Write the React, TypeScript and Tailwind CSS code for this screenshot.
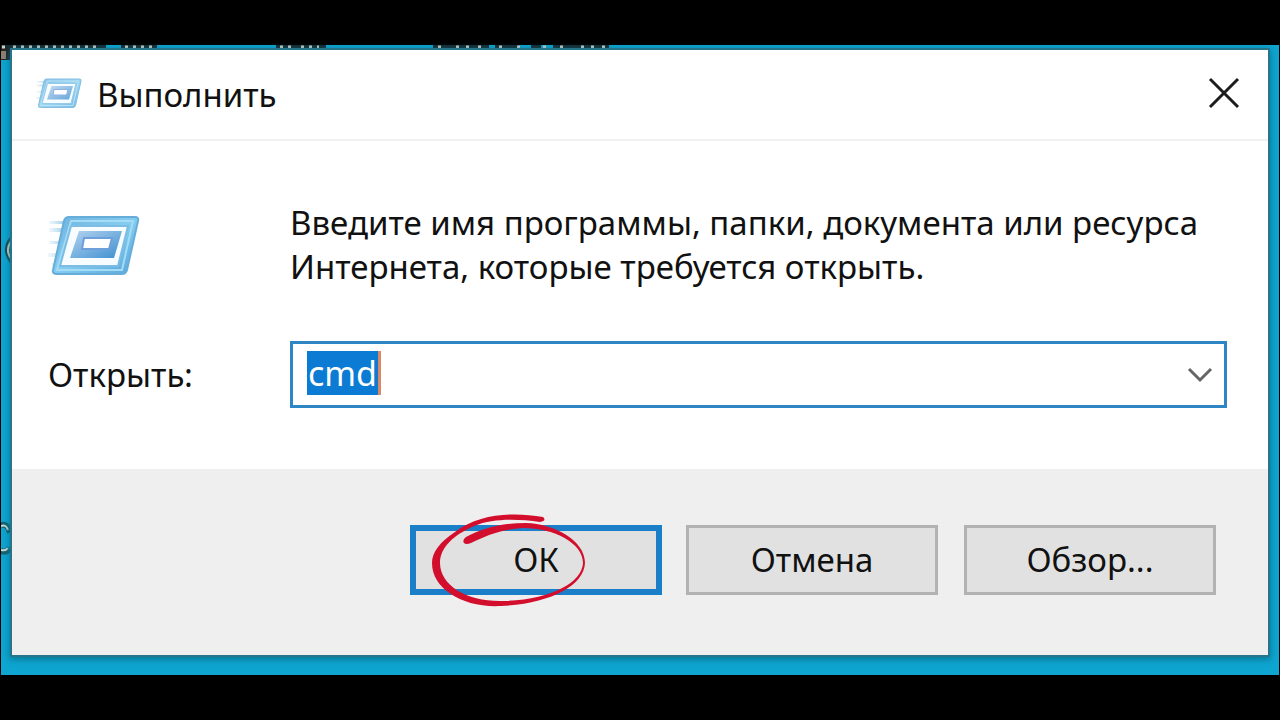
const buttonBase =
  "h-[70px] w-[252px] bg-[#e1e1e1] text-[33px] leading-[44px]";

function RunIcon({ className }: { className: string }) {
  return (
    <svg viewBox="0 0 92 64" className={className} aria-hidden="true">
      <defs>
        <linearGradient id="frame" x1="0" y1="0" x2="1" y2="1">
          <stop offset="0" stopColor="#6fb2e0" />
          <stop offset="0.5" stopColor="#84cdf0" />
          <stop offset="1" stopColor="#56a5db" />
        </linearGradient>
        <linearGradient id="screen" x1="0" y1="0" x2="1" y2="1">
          <stop offset="0" stopColor="#b5d3f0" />
          <stop offset="1" stopColor="#3d8fd0" />
        </linearGradient>
        <linearGradient id="trail" x1="0" y1="0" x2="1" y2="0">
          <stop offset="0" stopColor="#b9dcf0" stopOpacity="0.2" />
          <stop offset="1" stopColor="#8fc4e6" />
        </linearGradient>
      </defs>
      <path d="M1 8h18v3H1zM1 15h17v4H1zM1 28h14v3H1zM0 40h12v4H0zM4 50h6v3H4z" fill="url(#trail)" />
      <path d="M21 4h66q4 0 3 4L79 57q-1 4-5 4H9q-5 0-4-4L16 8q1-4 5-4z" fill="url(#frame)" stroke="#66add9" strokeWidth="2" />
      <path d="M23 8h62L74 57H9z" fill="none" stroke="#a4dcf5" strokeWidth="2" />
      <path d="M23 13h57l-10 40H12z" fill="#f6fcff" stroke="#7dbde4" strokeWidth="2" />
      <path d="M31 18h43l-8 27H22z" fill="url(#screen)" />
      <path d="M36 25h28l-3 11H34z" fill="#fff" stroke="#6f9fda" strokeWidth="2" />
    </svg>
  );
}

// Parts of the desktop icon labels that stick out from behind the window
function DesktopLabels() {
  return (
    <>
      <svg className="absolute top-0 left-0 h-4 w-[620px]" viewBox="0 0 620 16" aria-hidden="true">
        <path d="M0 3h105M120 3h36M275 3h50M432 3h56M494 3h24M530 3h10M552 3h56" stroke="#17282d" strokeWidth="6" />
        <path d="M0 3h9v12H0z" fill="#242020" />
        <path d="M0 6h5v8H0z" fill="#8d8170" />
        <path
          d="M1 2h3M12 2h88M124 2h30M279 2h12M300 2h18M437 2h3M455 2h3M465 2h4M477 2h3M498 2h3M516 2h3M542 2h3M559 2h3M580 2h3M590 2h5M601 2h3"
          stroke="#d5d0c5"
          strokeWidth="3"
          strokeDasharray="3 5"
        />
      </svg>
      <svg className="absolute top-[190px] left-0 h-8 w-[11px]" viewBox="0 0 11 32" aria-hidden="true">
        <path d="M11 4q-8 10 0 22" fill="none" stroke="#1d4550" strokeWidth="6" />
        <path d="M11 5q-8 10 0 20" fill="none" stroke="#e5dfc8" strokeWidth="2" />
        <path d="M9 10h2v10H9z" fill="#9a4a20" />
      </svg>
      <svg className="absolute top-[474px] left-0 h-10 w-[11px]" viewBox="0 0 11 40" aria-hidden="true">
        <path d="M0 6q7-2 9 8M0 32q6 2 9-3" fill="none" stroke="#17616e" strokeWidth="6" />
        <path d="M0 7q5-2 7 4M0 31q5 1 7-2" fill="none" stroke="#cfdcd8" strokeWidth="2" />
      </svg>
    </>
  );
}

function HandDrawnCircle() {
  return (
    <svg
      viewBox="0 0 160 100"
      className="pointer-events-none absolute -top-4 left-4 h-[100px] w-[160px] max-w-none"
      aria-hidden="true"
    >
      <path
        d="M117 8C88 3 54 4 29 23C14 33 6 43 6 54C6 80 37 99 75 97C123 95 158 77 159 54C159 31 128 15 100 14C75 14 55 20 40 28Q36 31 38 34Q40 36 45 34C61 26 77 20 97 19C128 19 157 34 157 54C156 74 124 91 77 92C42 93 14 77 14 54C14 38 28 26 48 17C68 9 92 10 114 13Q121 12 117 8Z"
        fill="#d30d2c"
      />
    </svg>
  );
}

export default function App() {
  return (
    <main className="min-h-screen bg-black px-px py-[45px] font-['Noto_Sans','Open_Sans',sans-serif] text-[#111]">
      <div className="relative bg-[#0ea5d0] px-[11px] pt-[5px] pb-5">
        <DesktopLabels />

        <section
          role="dialog"
          aria-labelledby="run-title"
          className="relative bg-white shadow-[0_0_0_2px_#26758a,0_2px_7px_2px_#07718f]"
        >
          <header className="flex h-[91px] items-center border-b-2 border-[#f1f1f1] px-6 pb-1">
            <RunIcon className="h-8 w-[46px] opacity-80" />
            <h1 id="run-title" className="mt-1 ml-[15px] text-[33px] leading-[44px]">
              Выполнить
            </h1>
            <button type="button" aria-label="Закрыть" className="ml-auto flex size-10 items-center justify-center">
              <svg viewBox="0 0 32 32" className="size-8" fill="none" stroke="#1c1c1c" strokeWidth="3" aria-hidden="true">
                <path d="M2 2l28 28M30 2L2 30" />
              </svg>
            </button>
          </header>

          <div className="h-[328px] pt-[60px] pr-[41px] pl-9">
            <div className="flex">
              <div className="w-[242px] shrink-0 pt-3">
                <RunIcon className="h-16 w-[92px]" />
              </div>
              <p className="text-[33px] leading-[44px]">
                Введите имя программы, папки, документа или ресурса Интернета, которые требуется открыть.
              </p>
            </div>

            <div className="mt-[52px] flex items-center">
              <label htmlFor="command" className="w-[242px] shrink-0 text-[33px] leading-[44px]">
                Открыть:
              </label>
              <div className="flex h-[67px] grow items-center border-[3px] border-[#2f86c5] pr-2 pl-[14px]">
                <input
                  id="command"
                  type="text"
                  defaultValue="cmd"
                  className="mb-1 h-11 w-[74px] border-r-[3px] border-[#d88a68] bg-[#0b7bd3] pl-px text-[34px] leading-[44px] text-white outline-none"
                />
                <button type="button" aria-label="Показать список" className="ml-auto flex size-8 items-center justify-center">
                  <svg viewBox="0 0 26 16" className="h-4 w-[26px]" fill="none" stroke="#666" strokeWidth="3" aria-hidden="true">
                    <path d="M2 2l11 11L24 2" />
                  </svg>
                </button>
              </div>
            </div>
          </div>

          <footer className="flex h-[186px] justify-end bg-[#efefef] pt-14 pr-[52px]">
            <div className="relative mr-6">
              <button type="button" className={`${buttonBase} border-[6px] border-[#1a7fc8]`}>
                ОК
              </button>
              <HandDrawnCircle />
            </div>
            <button type="button" className={`${buttonBase} mr-[26px] border-[3px] border-[#b2b2b2]`}>
              Отмена
            </button>
            <button type="button" className={`${buttonBase} border-[3px] border-[#b2b2b2]`}>
              Обзор...
            </button>
          </footer>
        </section>
      </div>
    </main>
  );
}
